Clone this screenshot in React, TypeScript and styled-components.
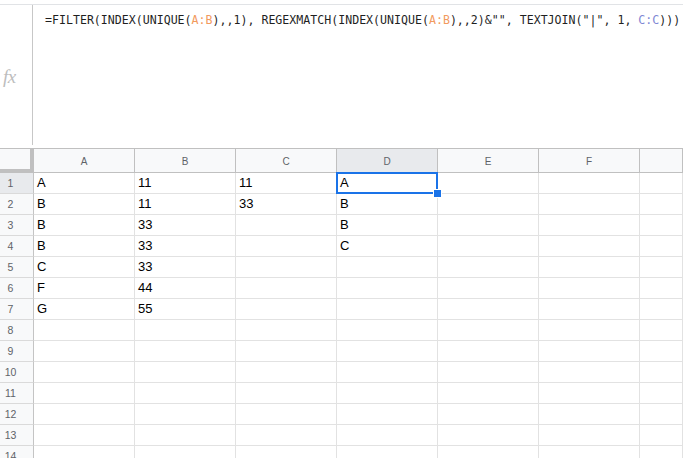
import React from "react";
import styled, { createGlobalStyle } from "styled-components";

const GlobalStyle = createGlobalStyle`
  html, body {
    margin: 0;
    padding: 0;
    background: #ffffff;
  }
  body {
    font-family: "Liberation Sans", Arial, sans-serif;
  }
`;

const columns = ["A", "B", "C", "D", "E", "F", ""];

const data: string[][] = [
  ["A", "11", "11", "A"],
  ["B", "11", "33", "B"],
  ["B", "33", "", "B"],
  ["B", "33", "", "C"],
  ["C", "33"],
  ["F", "44"],
  ["G", "55"],
  [],
  [],
  [],
  [],
  [],
  [],
  [],
];

const App = () => {
  return (
    <>
      <GlobalStyle />
      <Page>
        <FormulaBar>
          <FxBox>
            <FxLabel>fx</FxLabel>
          </FxBox>
          <FormulaText>
            =FILTER(INDEX(UNIQUE(<RangeRef $tone="orange">A:B</RangeRef>),,1),
            REGEXMATCH(INDEX(UNIQUE(<RangeRef $tone="orange">A:B</RangeRef>),,2)&amp;"",
            TEXTJOIN("|", 1, <RangeRef $tone="violet">C:C</RangeRef>)))
          </FormulaText>
        </FormulaBar>

        <Sheet>
          <HeaderRow>
            <Corner />
            {columns.map((col, i) => (
              <ColHeader key={i} $active={col === "D"} $last={i === columns.length - 1}>
                {col}
              </ColHeader>
            ))}
          </HeaderRow>

          {data.map((row, r) => (
            <Row key={r}>
              <RowHeader $active={r === 0}>{r + 1}</RowHeader>
              {columns.map((_, c) => (
                <Cell key={c} $last={c === columns.length - 1}>
                  {row[c] ?? ""}
                  {r === 0 && c === 3 && (
                    <Selection>
                      <FillHandle />
                    </Selection>
                  )}
                </Cell>
              ))}
            </Row>
          ))}
        </Sheet>
      </Page>
    </>
  );
};

export default App;

const Page = styled.div`
  width: 683px;
  height: 458px;
  overflow: hidden;
  padding-top: 4px;
  box-sizing: border-box;
  background: #ffffff;
`;

const FormulaBar = styled.div`
  display: flex;
  height: 141px;
  border-top: 1px solid #e1e3e6;
  box-sizing: border-box;
`;

const FxBox = styled.div`
  display: flex;
  align-items: center;
  width: 33px;
  flex-shrink: 0;
  border-right: 1px solid #c7c7c7;
  box-sizing: border-box;
  padding-left: 3px;
`;

const FxLabel = styled.span`
  font-family: "Liberation Serif", "Times New Roman", serif;
  font-style: italic;
  font-size: 19px;
  color: #bdbdbd;
  letter-spacing: -0.5px;
  margin-top: 3px;
`;

const FormulaText = styled.div`
  padding: 7px 0 0 12px;
  font-family: "DejaVu Sans Mono", "Liberation Mono", monospace;
  font-size: 11.6px;
  line-height: 16px;
  color: #1f1f1f;
  white-space: nowrap;
`;

const RangeRef = styled.span<{ $tone: "orange" | "violet" }>`
  color: ${(p) => (p.$tone === "orange" ? "#f29a5e" : "#7f87d4")};
`;

const Sheet = styled.div`
  margin-top: 3px;
  border-top: 1px solid #c0c0c0;
`;

const HeaderRow = styled.div`
  display: flex;
  height: 24px;
`;

const Corner = styled.div`
  width: 34px;
  height: 24px;
  flex-shrink: 0;
  box-sizing: border-box;
  background: #f8f9fa;
  border-right: 4px solid #c0c0c0;
  border-bottom: 4px solid #c0c0c0;
`;

const ColHeader = styled.div<{ $active?: boolean; $last?: boolean }>`
  display: flex;
  align-items: center;
  justify-content: center;
  ${(p) => (p.$last ? "flex: 1;" : "width: 101px; flex-shrink: 0;")}
  height: 24px;
  box-sizing: border-box;
  background: ${(p) => (p.$active ? "#e8eaed" : "#f8f9fa")};
  border-right: 1px solid #c0c0c0;
  border-bottom: 1px solid #c0c0c0;
  font-family: "Liberation Sans", Arial, sans-serif;
  font-size: 10px;
  color: #5f6368;
  padding-top: 1px;
`;

const Row = styled.div`
  display: flex;
  height: 21px;
`;

const RowHeader = styled.div<{ $active?: boolean }>`
  display: flex;
  align-items: center;
  justify-content: center;
  width: 34px;
  flex-shrink: 0;
  box-sizing: border-box;
  padding-right: 12px;
  background: ${(p) => (p.$active ? "#e8eaed" : "#f8f9fa")};
  border-right: 1px solid #c4c4c4;
  border-bottom: 1px solid #dadada;
  font-family: "Liberation Sans", Arial, sans-serif;
  font-size: 10.5px;
  color: #5f6368;
`;

const Cell = styled.div<{ $last?: boolean }>`
  position: relative;
  display: flex;
  align-items: flex-end;
  ${(p) => (p.$last ? "flex: 1;" : "width: 101px; flex-shrink: 0;")}
  box-sizing: border-box;
  padding: 0 0 2px 3px;
  border-right: 1px solid #e2e2e2;
  border-bottom: 1px solid #e2e2e2;
  font-family: "Liberation Sans", Arial, sans-serif;
  font-size: 13px;
  line-height: 17px;
  color: #000000;
`;

const Selection = styled.div`
  position: absolute;
  left: -1px;
  top: -1px;
  width: 102px;
  height: 22px;
  box-sizing: border-box;
  border: 2px solid #1a73e8;
`;

const FillHandle = styled.div`
  position: absolute;
  right: -6px;
  bottom: -6px;
  width: 7px;
  height: 7px;
  background: #1a73e8;
  border: 1px solid #ffffff;
  z-index: 2;
`;
